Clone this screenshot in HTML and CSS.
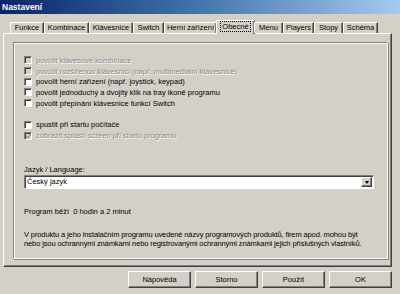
FILE: index.html
```html
<!DOCTYPE html>
<html lang="cs">
<head>
    <meta charset="UTF-8">
    <title>Nastavení</title>
    <link rel="stylesheet" href="styles.css">
</head>
<body>
    <div class="window">
        <div class="titlebar">Nastavení</div>

        <!-- záložky -->
        <div class="tabs">
            <span class="tab w34">Funkce</span>
            <span class="tab w45">Kombinace</span>
            <span class="tab w44">Klávesnice</span>
            <span class="tab w31">Switch</span>
            <span class="tab w53">Herní zařízení</span>
            <span class="tab active w37"><span class="focus">Obecné</span></span>
            <span class="tab w29">Menu</span>
            <span class="tab w31">Players</span>
            <span class="tab w29">Stopy</span>
            <span class="tab w35">Schéma</span>
        </div>

        <div class="panel">
            <div class="group">
                <div class="check disabled"><span class="box"></span>povolit klávesové kombinace</div>
                <div class="check disabled"><span class="box"></span>povolit rozšířenou klávesnici (např. multimediální klávesnice)</div>
                <div class="check"><span class="box"></span>povolit herní zařízení (např. joystick, keypad)</div>
                <div class="check"><span class="box"></span>povolit jednoduchý a dvojitý klik na tray ikoně programu</div>
                <div class="check"><span class="box"></span>povolit přepínání klávesnice funkcí Switch</div>

                <div class="check gap"><span class="box"></span>spustit při startu počítače</div>
                <div class="check disabled"><span class="box checked"></span>zobrazit splash screen při startu programu</div>

                <div class="field-label">Jazyk / Language:</div>
                <div class="combo">
                    <span class="combo-value">Český jazyk</span>
                    <span class="combo-btn"><span class="arrow"></span></span>
                </div>

                <p class="uptime">Program běží&nbsp; 0 hodin a 2 minut</p>

                <p class="notice">V produktu a jeho instalačním programu uvedené názvy programových produktů, firem apod. mohou být<br>nebo jsou ochrannými známkami nebo registrovanými ochrannými známkami jejich příslušných vlastníků.</p>
            </div>
        </div>

        <div class="buttons">
            <button>Nápověda</button>
            <button>Storno</button>
            <button>Použít</button>
            <button>OK</button>
        </div>
    </div>
</body>
</html>
```

FILE: styles.css
```css
body {
    margin: 0;
    padding: 0;
    background-color: #d4d0c8;
    font-family: 'Liberation Sans', Arial, sans-serif;
    font-size: 7.5px;
    color: #000;
}

.window {
    width: 400px;
    height: 294px;
    overflow: hidden;
}

.titlebar {
    height: 14px;
    line-height: 14px;
    padding-left: 2px;
    font-size: 8.5px;
    font-weight: bold;
    color: #fff;
    background: linear-gradient(to right, #0a246a, #3a6ea5 45%, #a6caf0);
}

/* záložky */
.tabs {
    display: flex;
    align-items: flex-end;
    height: 12px;
    margin-top: 7px;
    padding-left: 10px;
    position: relative;
    z-index: 2;
}

.tab {
    box-sizing: border-box;
    height: 11px;
    line-height: 10px;
    text-align: center;
    border-top: 1px solid #fff;
    border-left: 1px solid #fff;
    border-right: 1px solid #404040;
    box-shadow: inset -1px 0 0 #808080;
    border-radius: 1px 1px 0 0;
    white-space: nowrap;
}

.tab.active {
    height: 14px;
    margin: 0 -1px -1px;
    line-height: 12px;
    background-color: #d4d0c8;
}

.focus {
    border: 1px dotted #000;
    padding: 0 1px;
}

.w29 { width: 29px; }
.w31 { width: 31px; }
.w34 { width: 34px; }
.w35 { width: 35px; }
.w37 { width: 39px; }
.w44 { width: 44px; }
.w45 { width: 45px; }
.w53 { width: 53px; }

.panel {
    box-sizing: border-box;
    width: 389px;
    height: 234px;
    margin-left: 3px;
    padding: 8px 3px 6px 9px;
    border-top: 1px solid #fff;
    border-left: 1px solid #fff;
    border-right: 1px solid #404040;
    border-bottom: 1px solid #404040;
    box-shadow: inset -1px -1px 0 #808080;
}

.group {
    box-sizing: border-box;
    height: 217px;
    padding: 12px 8px 0 10px;
    border-top: 1px solid #808080;
    border-left: 1px solid #808080;
    border-right: 1px solid #fff;
    border-bottom: 1px solid #fff;
    box-shadow: inset 1px 1px 0 #fff, 1px 1px 0 #808080;
}

.check {
    display: flex;
    align-items: center;
    height: 10.7px;
    white-space: nowrap;
}

.check.gap {
    margin-top: 11.2px;
}

.check.disabled {
    color: #8a8a8a;
    text-shadow: 0.6px 0.6px 0 #fff;
}

.box {
    box-sizing: border-box;
    width: 8px;
    height: 8px;
    margin-right: 4px;
    background-color: #fff;
    border-top: 1px solid #808080;
    border-left: 1px solid #808080;
    border-right: 1px solid #fff;
    border-bottom: 1px solid #fff;
    box-shadow: inset 1px 1px 0 #404040;
    position: relative;
}

.disabled .box {
    background-color: #d4d0c8;
}

.box.checked::after {
    content: "";
    position: absolute;
    left: 1.5px;
    top: 0.5px;
    width: 2px;
    height: 3.5px;
    border-right: 1.2px solid #808080;
    border-bottom: 1.2px solid #808080;
    transform: rotate(40deg);
}

.field-label {
    margin-top: 24px;
    line-height: 10px;
}

.combo {
    box-sizing: border-box;
    display: flex;
    width: 350px;
    height: 14px;
    background-color: #fff;
    border-top: 1px solid #808080;
    border-left: 1px solid #808080;
    border-right: 1px solid #fff;
    border-bottom: 1px solid #fff;
    box-shadow: inset 1px 1px 0 #404040;
}

.combo-value {
    flex: 1;
    line-height: 12px;
    padding-left: 2px;
}

.combo-btn {
    box-sizing: border-box;
    width: 11px;
    margin: 1px 1px 1px 0;
    display: flex;
    align-items: center;
    justify-content: center;
    background-color: #d4d0c8;
    border-top: 1px solid #fff;
    border-left: 1px solid #fff;
    border-right: 1px solid #404040;
    border-bottom: 1px solid #404040;
    box-shadow: inset -1px -1px 0 #808080;
}

.arrow {
    width: 0;
    height: 0;
    border-left: 2.5px solid transparent;
    border-right: 2.5px solid transparent;
    border-top: 3px solid #000;
}

.uptime {
    margin: 18px 0 0;
    line-height: 10px;
}

.notice {
    margin: 13px 0 0;
    line-height: 9px;
    letter-spacing: -0.12px;
    white-space: nowrap;
}

.buttons {
    display: flex;
    justify-content: flex-end;
    gap: 4px;
    width: 392px;
    margin-top: 4px;
}

button {
    box-sizing: border-box;
    width: 63px;
    height: 17px;
    padding: 0;
    font-family: inherit;
    font-size: 7.5px;
    color: #000;
    background-color: #d4d0c8;
    border-top: 1px solid #fff;
    border-left: 1px solid #fff;
    border-right: 1px solid #404040;
    border-bottom: 1px solid #404040;
    box-shadow: inset -1px -1px 0 #808080;
}
```
